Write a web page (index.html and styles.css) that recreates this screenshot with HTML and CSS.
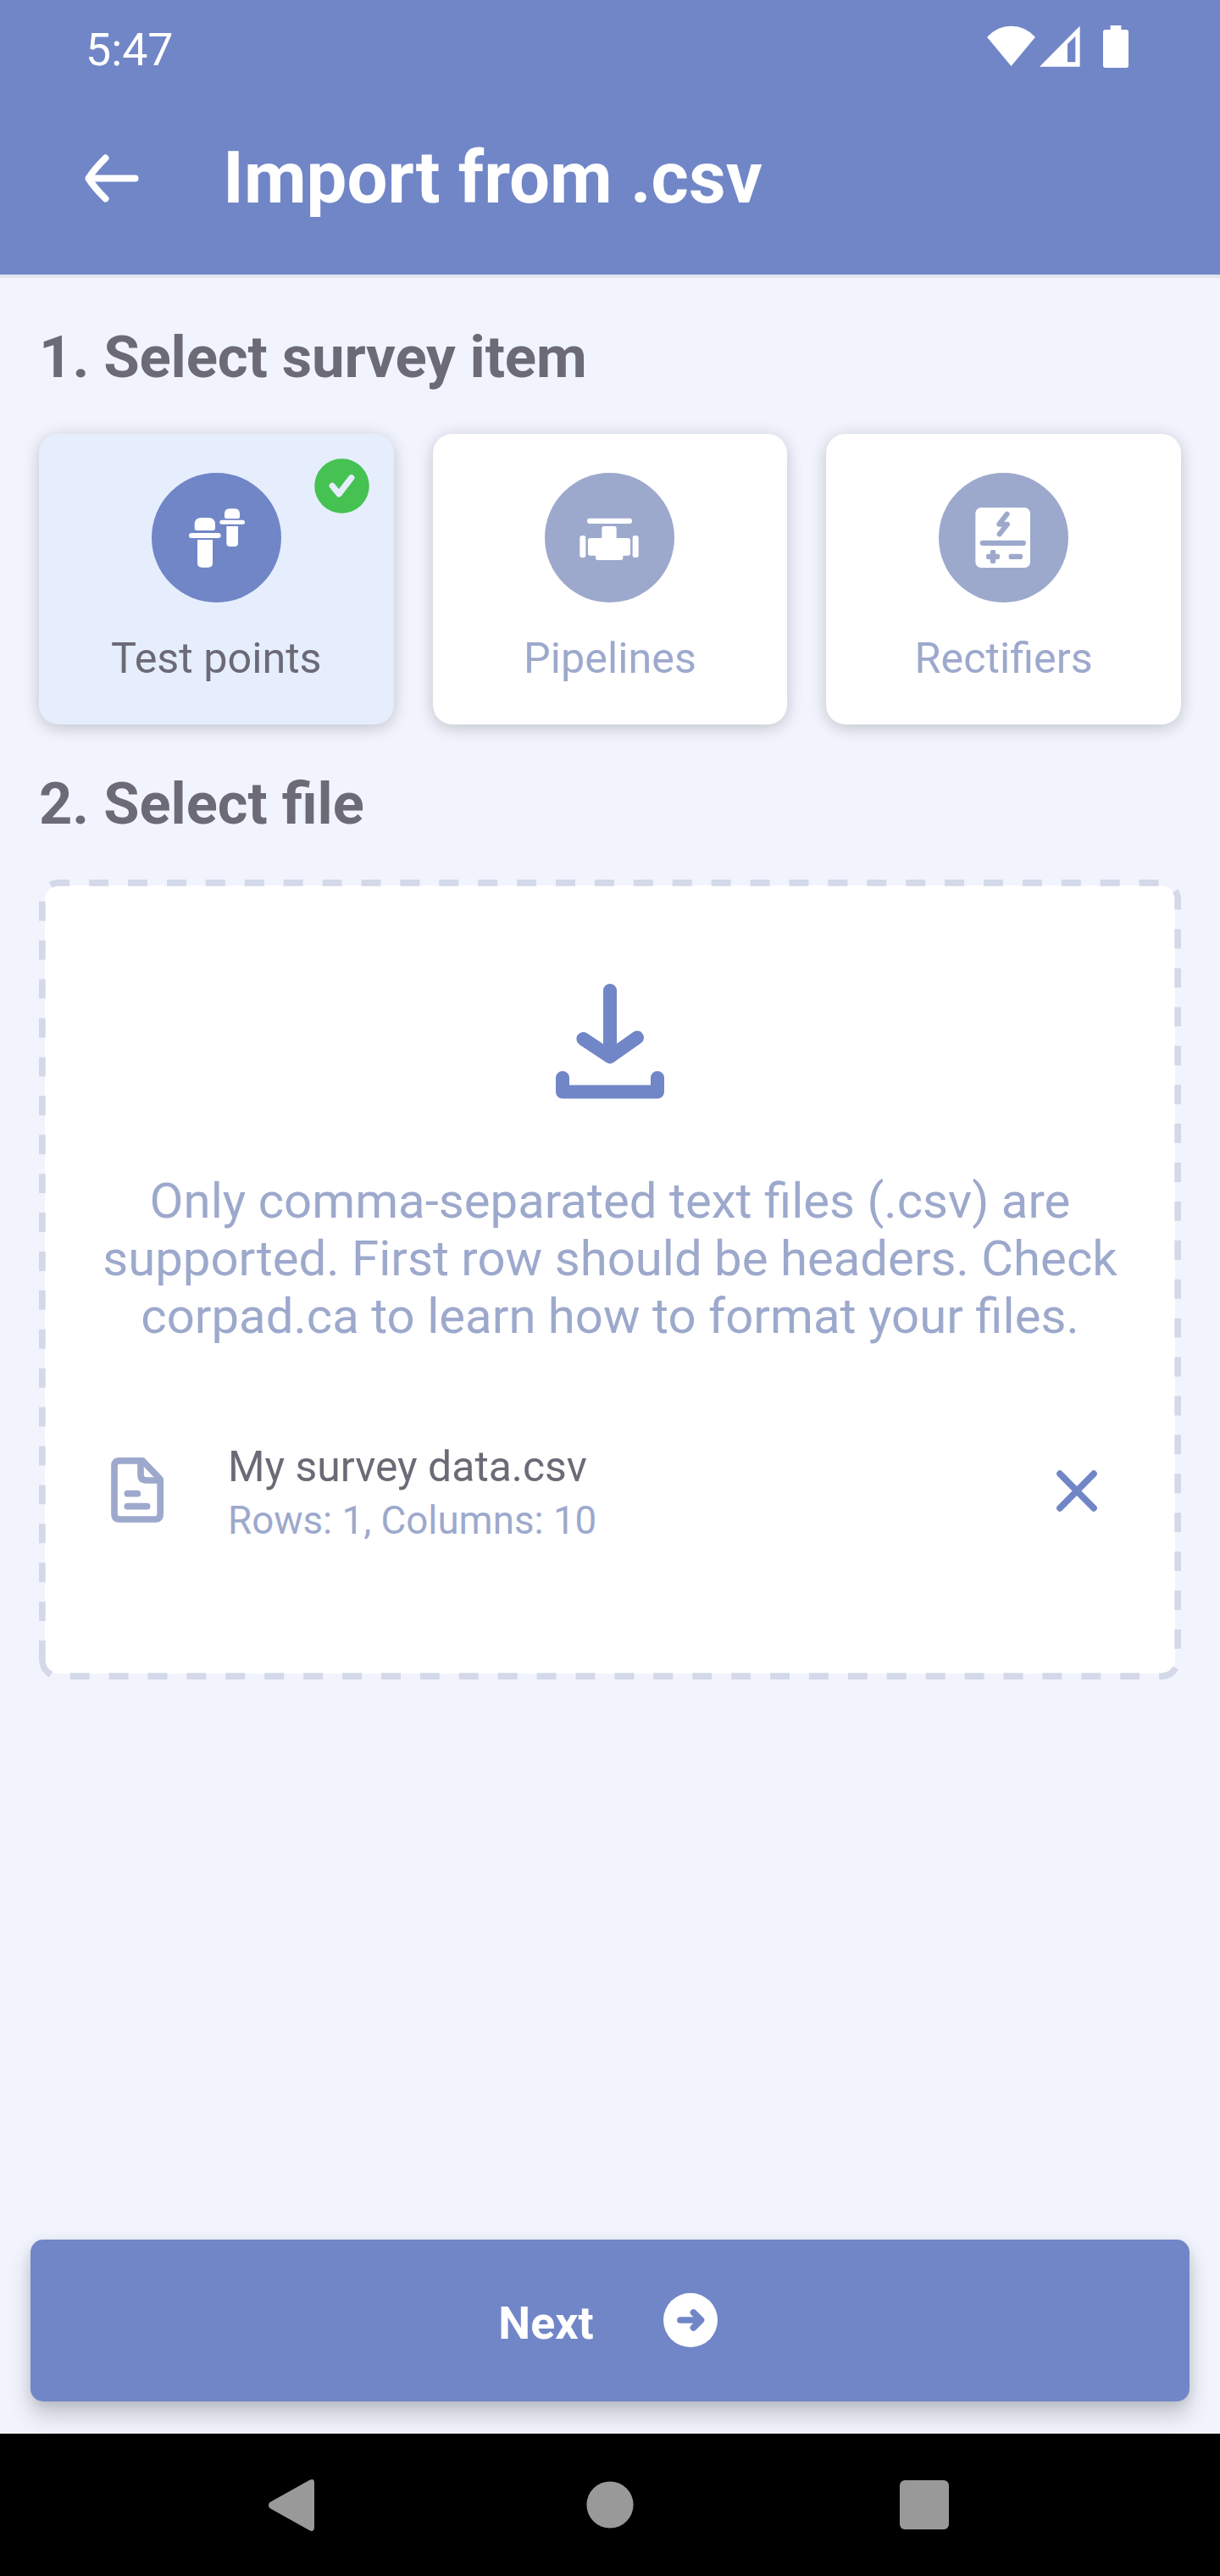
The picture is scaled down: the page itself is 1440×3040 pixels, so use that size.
FILE: index.html
```html
<!DOCTYPE html>
<html lang="en">
<head>
<meta charset="utf-8">
<title>Import from .csv</title>
<link rel="stylesheet" href="styles.css">
</head>
<body>
<div class="screen">
  <header class="header">
    <div class="status-bar">
      <span class="clock">5:47</span>
      <div class="status-icons">
        <svg class="wifi" viewBox="195 90 171 150" width="57" height="50"><path fill="#fff" d="M195 131Q231 92 280.500 92T366 131L280.500 234Z"/></svg>
        <svg class="signal" viewBox="381 90 144 150" width="48" height="50"><path fill="#fff" fill-rule="evenodd" d="M381 236L524 92V236ZM480 156V220H508V128Z"/></svg>
        <svg class="battery" viewBox="606 90 90 150" width="30" height="50"><path fill="#fff" d="M632 90H670V105H688Q696 105 696 113V232Q696 240 688 240H614Q606 240 606 232V113Q606 105 614 105H632Z"/></svg>
      </div>
    </div>
    <div class="toolbar">
      <svg class="back" viewBox="0 0 64 57" width="64" height="57"><path fill="none" stroke="#fff" stroke-width="8" stroke-linecap="round" stroke-linejoin="round" d="M59.500 28.500H4.500M24.500 4.500Q10 19 4.500 28.500Q10 38 24.500 52.500"/></svg>
      <h1 class="title">Import from .csv</h1>
    </div>
  </header>

  <main class="content">
    <h2 class="heading">1. Select survey item</h2>
    <div class="items">
      <button class="item item--selected">
        <svg class="item-icon" viewBox="477 204 459 459">
          <circle class="disc" cx="706.500" cy="433.500" r="229.500"/>
          <g fill="#fff">
            <path d="M629 387Q629 363 653 363H678Q702 363 702 387V400Q702 408 694 408H637Q629 408 629 400Z"/>
            <rect x="609" y="417" width="113" height="18" rx="9"/>
            <path d="M639 441H693V523Q693 539 677 539H655Q639 539 639 523Z"/>
            <path d="M735 349Q735 331 753 331H771Q789 331 789 349V360Q789 366 783 366H741Q735 366 735 360Z"/>
            <rect x="718" y="371.500" width="89" height="15" rx="7.500"/>
            <path d="M742 393H783V452Q783 465 770 465H755Q742 465 742 452Z"/>
          </g>
        </svg>
        <span class="item-label">Test points</span>
        <svg class="check" viewBox="0 0 65 65">
          <circle cx="32.500" cy="32.500" r="32.300" fill="#45c252"/>
          <path fill="none" stroke="#e6eefd" stroke-width="7.200" stroke-linecap="round" stroke-linejoin="round" d="M21.200 32.300L29 42L43.800 22.800"/>
        </svg>
      </button>
      <button class="item">
        <svg class="item-icon" viewBox="462 204 459 459">
          <circle class="disc" cx="691.500" cy="433.500" r="229.500"/>
          <g fill="#fff">
            <rect x="612" y="365" width="159" height="19" rx="9"/>
            <rect x="664" y="393" width="52" height="70" rx="8"/>
            <rect x="615" y="435" width="150" height="62" rx="8"/>
            <rect x="642" y="470" width="97" height="43" rx="8"/>
            <rect x="586" y="426" width="21" height="78" rx="8"/>
            <rect x="773" y="426" width="21" height="78" rx="8"/>
          </g>
        </svg>
        <span class="item-label">Pipelines</span>
      </button>
      <button class="item">
        <svg class="item-icon" viewBox="474 204 459 459">
          <circle class="disc" cx="703.500" cy="433.500" r="229.500"/>
          <rect x="604" y="327" width="194" height="213" rx="20" fill="#fff"/>
          <path fill="none" stroke="#9da9cc" stroke-width="18" stroke-linecap="round" stroke-linejoin="round" d="M716 350L688 386H717L689 421"/>
          <g fill="#9da9cc">
            <rect x="620" y="443" width="163" height="19" rx="9.500"/>
            <rect x="642" y="491" width="48" height="19" rx="6"/>
            <rect x="656.500" y="477" width="19" height="48" rx="6"/>
            <rect x="722" y="491" width="49" height="19" rx="6"/>
          </g>
        </svg>
        <span class="item-label">Rectifiers</span>
      </button>
    </div>

    <h2 class="heading heading--file">2. Select file</h2>
    <section class="dropzone">
      <svg class="outline" viewBox="0 0 1348 944" width="1348" height="944">
        <rect x="7" y="7" width="1334" height="930" rx="16" fill="#fff"/>
        <path fill="none" stroke="#d4d9e9" stroke-width="7.670" stroke-dasharray="22.954" d="M3.830 921V23A19.170 19.170 0 0 1 23 3.830H1325A19.170 19.170 0 0 1 1344.170 23V921A19.170 19.170 0 0 1 1325 940.170H23A19.170 19.170 0 0 1 3.830 921Z"/>
      </svg>
      <svg class="download" viewBox="656 1161 128 136" width="128" height="136">
        <g fill="none" stroke="#7186c7" stroke-width="16" stroke-linecap="round" stroke-linejoin="round">
          <path d="M720 1169V1244M688.300 1226L720 1247L752 1224.500"/>
          <path d="M664 1272V1288.500H776V1272"/>
        </g>
      </svg>
      <p class="hint">Only comma-separated text files (.csv) are<br>supported. First row should be headers. Check<br>corpad.ca to learn how to format your files.</p>
      <div class="file">
        <svg class="file-icon" viewBox="303 241 186 231" width="62" height="77">
          <g fill="none" stroke="#9da9cc" stroke-width="23" stroke-linecap="round" stroke-linejoin="round">
            <path d="M333 252.500H415L477.500 318V442Q477.500 460 459.500 460H333Q315 460 315 442V270.500Q315 252.500 333 252.500Z"/>
            <path d="M408 256V302Q408 322 428 322H472M361 369H397M361 414H431"/>
          </g>
        </svg>
        <div class="file-text">
          <span class="file-name">My survey data.csv</span>
          <span class="file-meta">Rows: 1, Columns: 10</span>
        </div>
        <svg class="remove" viewBox="0 0 48 49" width="48" height="49"><path stroke="#7186c7" stroke-width="7.700" stroke-linecap="round" d="M4 4.200L44 44.800M44 4.200L4 44.800"/></svg>
      </div>
    </section>
  </main>

  <button class="next">
    <span>Next</span>
    <svg viewBox="0 0 64 64" width="64" height="64">
      <circle cx="32" cy="32" r="32" fill="#fff"/>
      <path fill="none" stroke="#7186c7" stroke-width="7.700" stroke-linecap="round" stroke-linejoin="round" d="M20 32H44M35.500 23L44.500 32L35.500 41"/>
    </svg>
  </button>

  <nav class="nav-bar">
    <svg viewBox="317 2925 54 62" width="54" height="62"><path fill="#999" d="M318.500 2953L365 2927Q371 2924 371 2930V2982Q371 2989 365 2986L318.500 2960Q315.500 2956.500 318.500 2953Z"/></svg>
    <svg class="home" viewBox="0 0 56 56" width="56" height="56"><circle cx="28" cy="28" r="27.600" fill="#999"/></svg>
    <svg viewBox="0 0 58 58" width="58" height="58"><rect width="58" height="58" rx="6" fill="#999"/></svg>
  </nav>
</div>
</body>
</html>
```
FILE: styles.css
```css
* { box-sizing: border-box; }

body {
  margin: 0;
  background: #f1f4fd;
  font-family: Roboto, "Liberation Sans", sans-serif;
  color: #6b6a76;
}

svg { display: block; flex: none; }

button {
  border: 0;
  margin: 0;
  font: inherit;
}

.screen {
  display: flex;
  flex-direction: column;
  width: 1440px;
  height: 3040px;
  overflow: hidden;
}

.header {
  height: 328px;
  background: #7186c7;
  border-bottom: 4px solid #e2e5ee;
  color: #fff;
}

.status-bar {
  display: flex;
  align-items: center;
  justify-content: space-between;
  height: 118px;
  padding: 0 108px 0 101px;
}

.clock { font-size: 53.7px; line-height: 64px; }

.status-icons { display: flex; margin-bottom: 8px; }
.signal { margin-left: 5px; }
.battery { margin-left: 27px; }

.toolbar {
  display: flex;
  align-items: center;
  height: 182px;
  padding-left: 100px;
}

.back { margin-top: 3px; }

.title {
  margin: 1px 0 0 99px;
  font-size: 85.1px;
  font-weight: 700;
  line-height: 100px;
}

.content { flex: 1; padding: 53px 46px 0; }

.heading {
  margin: 0 0 49px;
  font-size: 69px;
  font-weight: 700;
  line-height: 82px;
  letter-spacing: -0.18px;
  font-variant-ligatures: common-ligatures;
}

.heading--file { margin: 53px 0 48px; letter-spacing: 0; font-size: 68.6px; }

.items {
  display: grid;
  grid-template-columns: repeat(3, 1fr);
  gap: 46px;
}

.item {
  position: relative;
  display: flex;
  flex-direction: column;
  align-items: center;
  height: 343px;
  padding: 46px 0 0;
  border-radius: 23px;
  background: #fff;
  color: #9da9cc;
  box-shadow: 0 5px 18px rgba(0, 0, 0, 0.15), 0 0 24px rgba(0, 0, 0, 0.06);
}

.item--selected { background: #e6eefd; color: #6b6a76; }

.item-icon { width: 153px; height: 153px; }
.disc { fill: #9da9cc; }
.item--selected .disc { fill: #7186c7; }

.item-label {
  margin-top: 37px;
  font-size: 50.3px;
  line-height: 58px;
}

.check {
  position: absolute;
  top: 29px;
  right: 29px;
  width: 65px;
  height: 65px;
}

.dropzone {
  position: relative;
  display: flex;
  flex-direction: column;
  align-items: center;
  height: 944px;
  padding-top: 123px;
}

.outline { position: absolute; inset: 0; }
.download, .hint, .file { position: relative; }

.hint {
  margin: 86px 0 0;
  font-size: 58.1px;
  line-height: 68.2px;
  text-align: center;
  white-space: nowrap;
  color: #9da9cc;
}

.file {
  display: flex;
  align-items: flex-start;
  align-self: stretch;
  margin-top: 113px;
  padding: 0 99px 0 85px;
}

.file-icon { margin-top: 19px; }

.file-text {
  display: flex;
  flex: 1;
  flex-direction: column;
  gap: 5px;
  margin-left: 76px;
}

.file-name { font-size: 49.9px; line-height: 60px; }
.file-meta { font-size: 45.7px; line-height: 58px; color: #9da9cc; }
.remove { margin-top: 34px; }

.next {
  display: flex;
  align-items: center;
  justify-content: center;
  gap: 82px;
  height: 191px;
  margin: 0 36px 38px;
  padding: 0 5px 1px 0;
  border-radius: 15px;
  background: #7186c7;
  color: #fff;
  font-size: 53.7px;
  font-weight: 700;
  box-shadow: 0 16px 26px rgba(0, 0, 0, 0.19), 0 3px 14px rgba(0, 0, 0, 0.09);
}

.next span { margin-top: 6px; }

.nav-bar {
  position: relative;
  display: flex;
  align-items: center;
  justify-content: space-between;
  height: 168px;
  padding: 0 320px 0 317px;
  background: #000;
}

.home { margin-left: 7px; }
```
